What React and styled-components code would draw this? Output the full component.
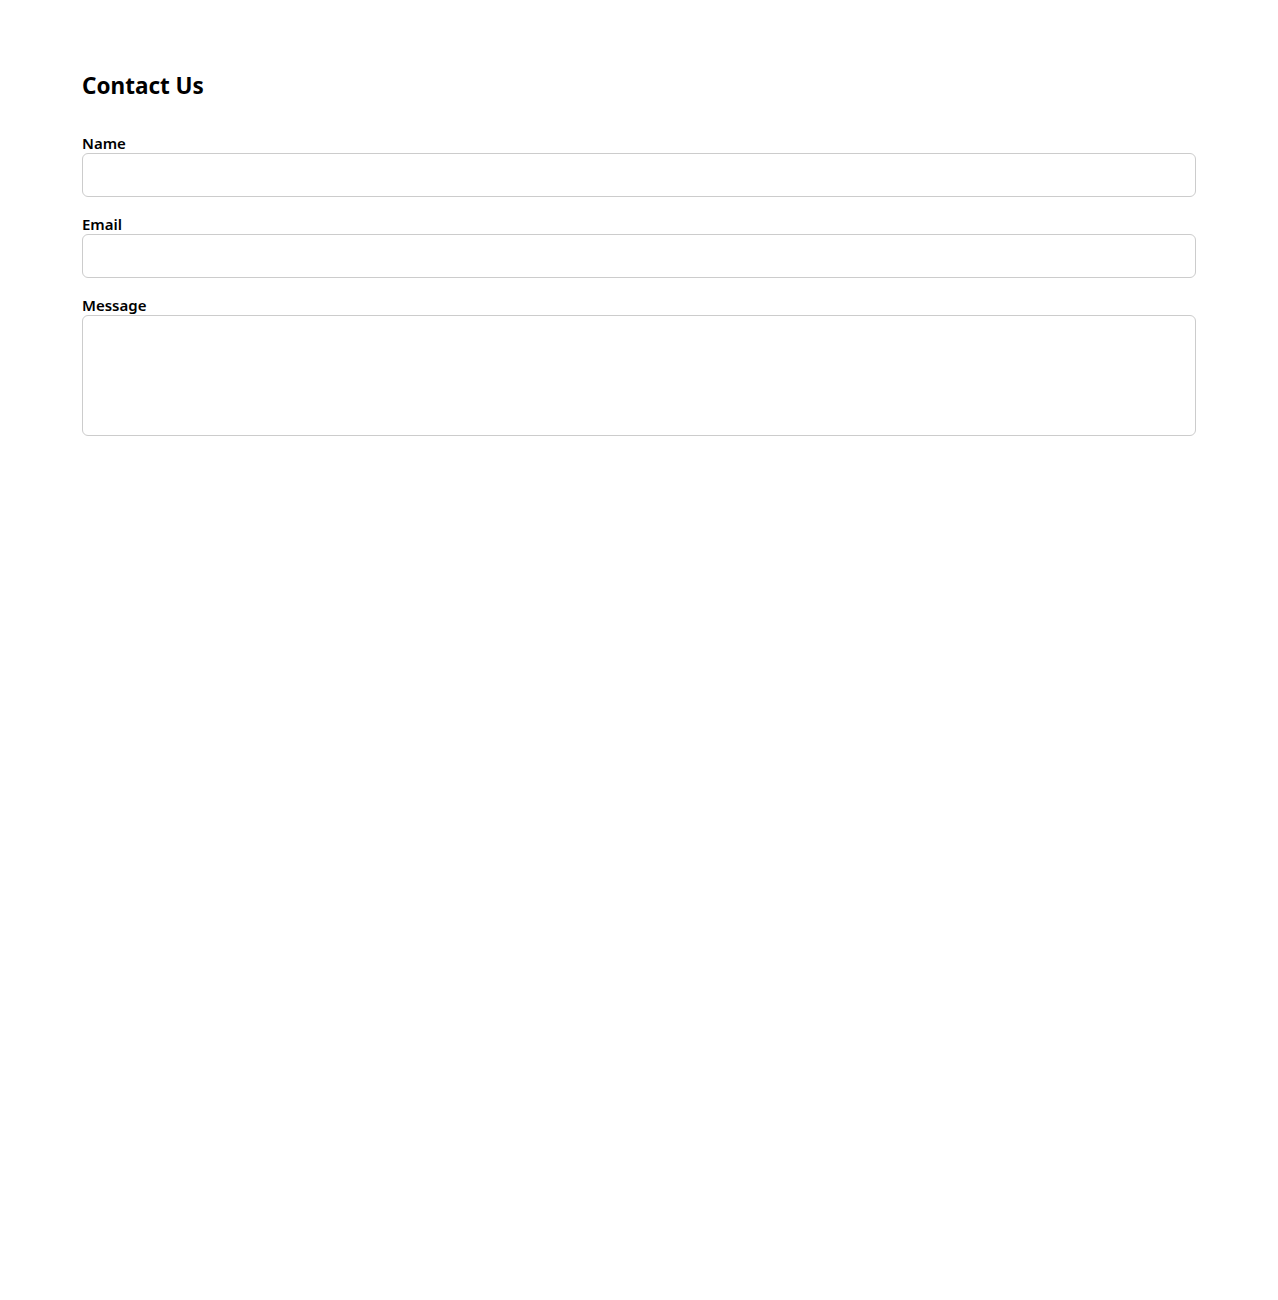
import React from 'react';
import styled, { createGlobalStyle } from 'styled-components';

const GlobalStyle = createGlobalStyle`
  body {
    margin: 0;
    background: #ffffff;
    font-family: "Noto Sans", "Open Sans", sans-serif;
    color: #000000;
  }
`

const Page = styled.div`
  padding: 69px 82px;
`

const Title = styled.h2`
  margin: 0 0 31px 0;
  font-size: 22.5px;
  font-weight: 700;
  line-height: 34px;
`

const Form = styled.form`
  display: flex;
  flex-direction: column;
  gap: 18px;
`

const Field = styled.div`
  display: flex;
  flex-direction: column;
`

const Label = styled.label`
  font-size: 15px;
  font-weight: 600;
  line-height: 19px;
`

const Input = styled.input`
  box-sizing: border-box;
  height: 44px;
  width: 100%;
  border: 1px solid #cccccc;
  border-radius: 6px;
  padding: 0 10px;
  font-family: inherit;
  font-size: 15px;
  outline: none;
`

const TextArea = styled.textarea`
  box-sizing: border-box;
  height: 121px;
  width: 100%;
  border: 1px solid #cccccc;
  border-radius: 6px;
  padding: 10px;
  font-family: inherit;
  font-size: 15px;
  resize: none;
  outline: none;
  display: block;
`

const App = () => {
  return (
    <Page>
      <GlobalStyle />
      <Title>Contact Us</Title>
      <Form>
        <Field>
          <Label htmlFor="name">Name</Label>
          <Input id="name" type="text" />
        </Field>
        <Field>
          <Label htmlFor="email">Email</Label>
          <Input id="email" type="email" />
        </Field>
        <Field>
          <Label htmlFor="message">Message</Label>
          <TextArea id="message" />
        </Field>
      </Form>
    </Page>
  )
}

export default App;
